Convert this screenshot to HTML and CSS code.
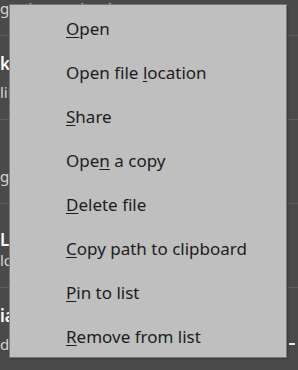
FILE: index.html
```html
<!DOCTYPE html>
<html lang="en">
<head>
    <meta charset="UTF-8">
    <meta name="viewport" content="width=device-width, initial-scale=1.0">
    <title>Recent files</title>
    <link rel="stylesheet" href="styles.css">
</head>
<body>

    <div class="lista">
        <div class="fila">
            <div class="titulo">Basic setup</div>
            <div class="sub">getting Basics.docx</div>
        </div>
        <div class="fila">
            <div class="titulo">kickoff notes</div>
            <div class="sub">library &gt; Documents</div>
        </div>
        <div class="fila">
            <div class="titulo">&nbsp;</div>
            <div class="sub">g Drive &gt; Shared</div>
        </div>
        <div class="fila">
            <div class="titulo bajo">Location plan</div>
            <div class="sub">lodge &gt; Projects</div>
        </div>
        <div class="fila">
            <div class="titulo">ia report</div>
            <div class="sub">
                <span>d Desktop</span>
                <span class="guion"></span>
            </div>
        </div>
    </div>

    <div class="menu">
        <div class="item"><u>O</u>pen</div>
        <div class="item">Open file <u>l</u>ocation</div>
        <div class="item"><u>S</u>hare</div>
        <div class="item">Ope<u>n</u> a copy</div>
        <div class="item"><u>D</u>elete file</div>
        <div class="item"><u>C</u>opy path to clipboard</div>
        <div class="item"><u>P</u>in to list</div>
        <div class="item"><u>R</u>emove from list</div>
    </div>

</body>
</html>
```

FILE: styles.css
```css
body {
    margin: 0;
    background: #4a4a4a;
    font-family: "Noto Sans", "Open Sans", sans-serif;
    overflow: hidden;
    height: 370px;
    position: relative;
}

.lista {
    margin-top: -48px;
}

.fila {
    height: 84px;
    box-sizing: border-box;
    padding-top: 16px;
    border-bottom: 1px solid #5f5f5f;
    white-space: nowrap;
    overflow: hidden;
}

.titulo {
    color: #ffffff;
    font-size: 17px;
    font-weight: 600;
    line-height: 24px;
    height: 24px;
}

.titulo.bajo {
    padding-top: 8px;
    box-sizing: border-box;
}

.sub {
    color: #d6d6d6;
    font-size: 15px;
    line-height: 26px;
    margin-top: 3px;
    display: flex;
    justify-content: space-between;
    align-items: center;
}

.guion {
    width: 6px;
    height: 2px;
    background: #e8e8e8;
    margin-right: 3px;
}

/* menu contextual */
.menu {
    position: absolute;
    top: 4px;
    left: 9px;
    width: 278px;
    height: 354px;
    box-sizing: border-box;
    background: #bfbfbf;
    border: 1px solid #7a7a7a;
    padding: 2px 0;
    box-shadow: 1px 1px 2px rgba(0,0,0,0.25);
}

.item {
    height: 44px;
    line-height: 44px;
    padding-left: 56px;
    font-size: 17px;
    color: #1c1c1c;
}

.item u {
    text-underline-offset: 2px;
}
```
